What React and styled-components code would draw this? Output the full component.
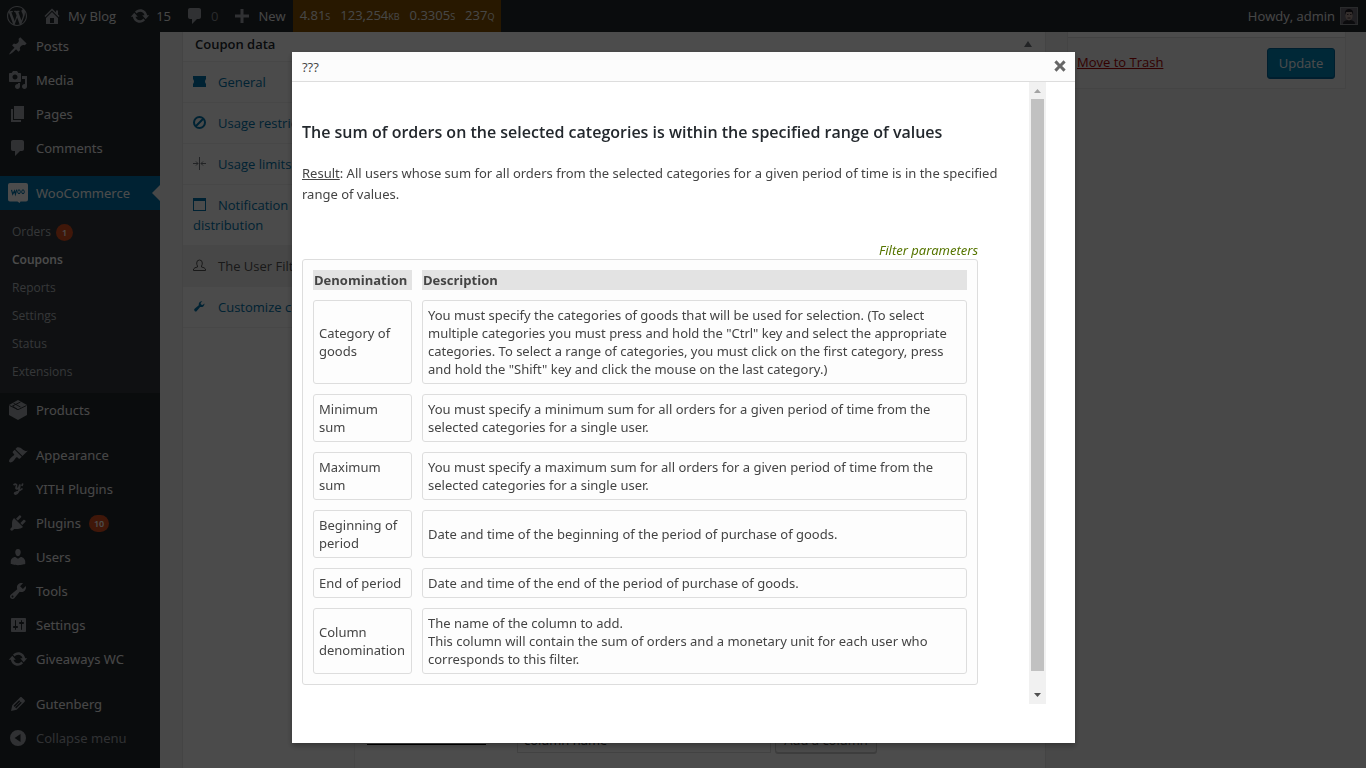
import React from "react";
import styled, { createGlobalStyle, css } from "styled-components";

const FONT = '"Open Sans", "Noto Sans", sans-serif';
const WIDE_FONT = '"Noto Sans", "Open Sans", sans-serif';

const GlobalStyle = createGlobalStyle`
  *, *::before, *::after { box-sizing: border-box; }
  body { margin: 0; background: #f1f1f1; font: 13px/20px ${FONT}; color: #444; }
  a { text-decoration: none; color: inherit; }
  ul { list-style: none; margin: 0; padding: 0; }
  h1, h2, p { margin: 0; }
`;

/* ---------- icons (20 x 20 grid) ---------- */

const PATHS = {
  wordpress:
    "M20 10c0-5.51-4.49-10-10-10C4.48 0 0 4.49 0 10c0 5.52 4.48 10 10 10 5.51 0 10-4.48 10-10zM7.78 15.37L4.37 6.22c.55-.02 1.17-.08 1.17-.08.5-.06.44-1.13-.06-1.11 0 0-1.45.11-2.37.11-.18 0-.37 0-.58-.01C4.12 2.69 6.87 1.11 10 1.11c2.33 0 4.45.87 6.05 2.34-.68-.11-1.65.39-1.65 1.58 0 .74.45 1.36.9 2.1.35.61.55 1.36.55 2.46 0 1.49-1.4 5-1.4 5l-3.03-8.37c.54-.02.82-.17.82-.17.5-.05.44-1.25-.06-1.22 0 0-1.44.12-2.38.12-.87 0-2.33-.12-2.33-.12-.5-.03-.56 1.2-.06 1.22l.92.08 1.26 3.41zM17.41 10c.24-.64.74-1.87.43-4.25.7 1.29 1.05 2.71 1.05 4.25 0 3.29-1.73 6.24-4.4 7.78.97-2.59 1.94-5.2 2.92-7.78zM6.1 18.09C3.12 16.65 1.11 13.53 1.11 10c0-1.3.23-2.48.72-3.59C3.25 10.3 4.67 14.2 6.1 18.09zm4.03-6.63l2.58 6.98c-.86.29-1.76.45-2.71.45-.79 0-1.57-.11-2.29-.33.81-2.38 1.62-4.74 2.42-7.1z",
  home:
    "M16 8.5l1.53 1.53-1.06 1.06L10 4.6l-6.47 6.49-1.06-1.06L10 2.5l4 4v-2h2v4zm-6-2.46l6 5.99V18H4v-5.97zM12 17v-5H8v5h4z",
  update:
    "M10.2 3.28c3.53 0 6.43 2.61 6.92 6h2.08l-3.5 4-3.5-4h2.32c-.45-1.97-2.21-3.45-4.32-3.45-1.45 0-2.73.71-3.54 1.78L4.95 5.66C6.23 4.2 8.11 3.28 10.2 3.28zm-.4 13.44c-3.52 0-6.43-2.61-6.92-6H.8l3.5-4c1.17 1.33 2.33 2.67 3.5 4H5.48c.45 1.97 2.21 3.45 4.32 3.45 1.45 0 2.73-.71 3.54-1.78l1.71 1.95c-1.28 1.46-3.15 2.38-5.25 2.38z",
  comment:
    "M5 2h9c1.1 0 2 .9 2 2v7c0 1.1-.9 2-2 2h-2l-5 5v-5H5c-1.1 0-2-.9-2-2V4c0-1.1.9-2 2-2z",
  plus: "M17 8.5v3h-5.5V17h-3v-5.500H3v-3h5.500V3h3v5.500z",
  pin:
    "M10.44 3.02l1.82-1.82 6.36 6.35-1.83 1.82c-1.05-.68-2.48-.57-3.41.36l-.75.75c-.92.93-1.04 2.35-.35 3.41l-1.83 1.82-2.41-2.41-2.8 2.79c-.42.42-3.38 2.71-3.8 2.29s1.86-3.39 2.28-3.81l2.79-2.79L4.1 9.36l1.83-1.82c1.05.69 2.48.57 3.4-.36l.75-.75c.93-.92 1.05-2.35.36-3.41z",
  media:
    "M13 11V4c0-.55-.45-1-1-1h-1.67L9 1H5L3.67 3H2c-.55 0-1 .45-1 1v7c0 .55.45 1 1 1h10c.55 0 1-.45 1-1zM7 4.5c1.38 0 2.5 1.12 2.5 2.5S8.38 9.5 7 9.5 4.5 8.38 4.5 7 5.62 4.5 7 4.5zM14 6h5v10.5c0 1.38-1.12 2.5-2.5 2.5S14 17.88 14 16.5s1.12-2.5 2.5-2.5c.17 0 .34.02.5.05V9h-3V6zm-4 8.05V13h2v3.5c0 1.38-1.12 2.5-2.5 2.5S7 17.88 7 16.5 8.12 14 9.5 14c.17 0 .34.02.5.05z",
  page: "M6 15V2h10v13H6zm-1 1h8v2H3V5h2v11z",
  appearance:
    "M14.48 11.06L7.41 3.99l1.5-1.5c.5-.56 2.3-.47 3.51.32 1.21.8 1.43 1.28 2.91 2.1 1.18.64 2.45 1.26 4.45.85zm-.71.71L6.7 4.7 4.93 6.47c-.39.39-.39 1.02 0 1.41l1.06 1.06c.39.39.39 1.03 0 1.42-.6.6-1.43 1.11-2.21 1.69-.35.26-.7.53-1.01.84C1.43 14.23.4 16.08 1.4 17.07c.99 1 2.84-.03 4.18-1.36.31-.31.58-.66.85-1.02.57-.78 1.08-1.61 1.69-2.21.39-.39 1.02-.39 1.41 0l1.06 1.06c.39.39 1.02.39 1.41 0z",
  plugins:
    "M13.11 4.36L9.87 7.6 8 5.73l3.24-3.24c.35-.34 1.05-.2 1.56.32.52.51.66 1.21.31 1.55zm-8 1.77l.91-1.12 9.01 9.01-1.19.84c-.71.71-2.63 1.16-3.82 1.16H6.14L4.9 17.26c-.59.59-1.54.59-2.12 0-.59-.58-.59-1.53 0-2.12l1.24-1.24v-3.88c0-1.13.4-3.19 1.09-3.89zm7.26 3.97l3.24-3.24c.34-.35 1.04-.21 1.55.31.52.51.66 1.21.31 1.55l-3.24 3.25z",
  users:
    "M10 9.25c-2.27 0-2.73-3.44-2.73-3.44C7 4.02 7.82 2 9.97 2c2.16 0 2.98 2.02 2.71 3.81 0 0-.41 3.44-2.68 3.44zm0 2.57L12.72 10c2.39 0 4.52 2.33 4.52 4.53v2.49s-3.65 1.13-7.24 1.13c-3.65 0-7.24-1.13-7.24-1.13v-2.49c0-2.25 1.94-4.48 4.47-4.48z",
  tools:
    "M16.68 9.77c-1.34 1.34-3.3 1.67-4.95.99l-5.41 6.52c-.99.99-2.59.99-3.58 0s-.99-2.59 0-3.57l6.52-5.42c-.68-1.65-.35-3.61.99-4.95 1.28-1.28 3.12-1.62 4.72-1.06l-2.89 2.89 2.82 2.82 2.86-2.87c.53 1.58.18 3.39-1.08 4.65zM3.81 16.21c.4.39 1.04.39 1.43 0 .4-.4.4-1.04 0-1.43-.39-.4-1.03-.4-1.43 0-.39.39-.39 1.03 0 1.43z",
  settings:
    "M18 16V4c0-.55-.45-1-1-1H4c-.55 0-1 .45-1 1v12c0 .55.45 1 1 1h13c.55 0 1-.45 1-1zM8 11h1c.55 0 1 .45 1 1s-.45 1-1 1H8v1.5c0 .28-.22.5-.5.5s-.5-.22-.5-.5V13H6c-.55 0-1-.45-1-1s.45-1 1-1h1V5.5c0-.28.22-.5.5-.5s.5.22.5.5V11zm5-2h-1c-.55 0-1-.45-1-1s.45-1 1-1h1V5.5c0-.28.22-.5.5-.5s.5.22.5.5V7h1c.55 0 1 .45 1 1s-.45 1-1 1h-1v5.5c0 .28-.22.5-.5.5s-.5-.22-.5-.5V9z",
  edit:
    "M13.89 3.39l2.71 2.72c.46.46.42 1.24.03 1.64l-8.01 8.02-5.56 1.16 1.16-5.58s7.6-7.63 7.99-8.03c.39-.39 1.22-.39 1.68.07zm-2.73 2.79l-5.59 5.61 1.11 1.11 5.54-5.65zm-2.97 8.23l5.58-5.6-1.07-1.08-5.59 5.6z",
  collapse:
    "M10 2a8 8 0 1 0 0 16 8 8 0 0 0 0-16zm2.5 4v8L6.6 10z",
  close:
    "M12.12 10l3.53 3.53-2.12 2.12L10 12.12l-3.54 3.54-2.12-2.12L7.88 10 4.34 6.46l2.12-2.12L10 7.88l3.54-3.53 2.12 2.12z",
};

const IconSvg = styled.svg`
  flex: none;
  display: block;
  width: ${(p) => p.$size || 20}px;
  height: ${(p) => p.$size || 20}px;
  fill: currentColor;
`;

function Icon({ name, size }) {
  return (
    <IconSvg $size={size} viewBox="0 0 20 20" aria-hidden="true">
      <path fillRule="evenodd" d={PATHS[name]} />
    </IconSvg>
  );
}

function ProductsIcon() {
  return (
    <IconSvg viewBox="0 0 20 20" aria-hidden="true">
      <path d="M10 0l9 5v10l-9 5-9-5V5z" />
      <path
        d="M1.500 5.500L10 9.700l8.500-4.200M5.500 3.200l7 3.800M9.500 9.500l-5-3.500 8-4"
        fill="none"
        stroke="#23282d"
        strokeWidth=".9"
      />
    </IconSvg>
  );
}

function WooIcon() {
  return (
    <IconSvg viewBox="0 0 20 20" aria-hidden="true">
      <path d="M2 0h16q2 0 2 2v14.500q0 2-2 2h-5.500L11.500 20 9.500 18.500H2q-2 0-2-2V2q0-2 2-2z" />
      <path
        d="M3.500 6.800l1.200 4.400 1.800-3.300.9 3.300 1.300-4.600"
        fill="none"
        stroke="#0073aa"
        strokeWidth="1.200"
      />
      <ellipse cx="11" cy="8.800" rx="1.300" ry="2" fill="none" stroke="#0073aa" />
      <ellipse cx="15" cy="8.800" rx="1.300" ry="2" fill="none" stroke="#0073aa" />
    </IconSvg>
  );
}

function YithIcon() {
  return (
    <IconSvg viewBox="0 0 20 20" aria-hidden="true">
      <path
        d="M5.500 6c2-1.500 3.500-1 3 1s-1 3 .5 2.800 2.500-2 3-4.300c-.3 4-1 8.500-4 9.500-1.500.4-2-1-.5-1.500 2.500-1 5-2 7-4M14.800 4.500l-1 2.500"
        fill="none"
        stroke="currentColor"
        strokeWidth="1.700"
      />
    </IconSvg>
  );
}

const MENU_ICONS = { yith: YithIcon, products: ProductsIcon };

function MenuIcon({ name }) {
  const Drawing = MENU_ICONS[name];
  return Drawing ? <Drawing /> : <Icon name={name} />;
}

function Avatar() {
  return (
    <svg width="18" height="18" viewBox="0 0 18 18" role="img" aria-label="admin">
      <rect width="18" height="18" fill="#8c8f94" />
      <rect x="1" y="1" width="16" height="16" fill="#6d6a72" />
      <path d="M3 17c0-3 2.500-4 6-4s6 1 6 4z" fill="#26262c" />
      <ellipse cx="9" cy="8.500" rx="3.600" ry="5" fill="#b09a94" />
      <path d="M5 8c-.6-4 1.200-6 4-6s4.800 2 4 6l-1-3H6z" fill="#1f1c22" />
      <path d="M7 7.500h1.500M10 7.500h1.500M7.500 11h3" stroke="#40343a" />
    </svg>
  );
}

/* ---------- admin bar ---------- */

const AdminBar = styled.header`
  position: fixed;
  inset: 0 0 auto 0;
  z-index: 2;
  height: 32px;
  display: flex;
  align-items: stretch;
  padding: 0 8px 0 7px;
  background: #23282d;
  color: #eee;
`;

const BarLink = styled.a`
  display: flex;
  align-items: center;
  gap: 6px;
  padding-right: ${(p) => p.$after || 14}px;
  color: ${(p) => (p.$dim ? "#8b8f93" : "#eee")};
  svg { color: #a0a5aa; }
`;

const Stats = styled.a`
  display: flex;
  align-items: center;
  gap: 10px;
  padding: 0 7px;
  background: #855000;
  color: #eee;
  small { font-size: 9px; }
`;

const Account = styled.a`
  display: flex;
  align-items: center;
  gap: 5px;
  margin-left: auto;
`;

/* ---------- side menu ---------- */

const Shell = styled.div`
  display: grid;
  grid-template-columns: 160px minmax(0, 1fr);
  min-height: 100vh;
`;

const SideMenu = styled.nav`
  padding-top: 29px;
  background: #23282d;
  color: #eee;
  font-family: ${WIDE_FONT};
`;

const MenuLink = styled.a`
  position: relative;
  display: flex;
  align-items: center;
  gap: 8px;
  height: 34px;
  margin-top: ${(p) => (p.$spaced ? 11 : 0)}px;
  padding-left: 8px;
  color: ${(p) => (p.$dim ? "#a0a5aa" : "#eee")};
  svg { color: ${(p) => (p.$active ? "#fff" : "#a0a5aa")}; }
  ${(p) =>
    p.$active &&
    css`
      background: #0073aa;
      color: #fff;
      &::after {
        content: "";
        position: absolute;
        right: 0;
        border: 8px solid transparent;
        border-right-color: #f1f1f1;
        border-left-width: 0;
      }
    `}
`;

const SubMenu = styled.ul`
  padding: 8px 0 7px;
  background: #32373c;
  font-family: ${FONT};
`;

const SubLink = styled.a`
  display: flex;
  align-items: center;
  gap: 5px;
  height: 28px;
  padding-left: 12px;
  font-size: 12px;
  font-weight: ${(p) => (p.$current ? 600 : 400)};
  color: ${(p) => (p.$current ? "#fff" : "#b4b9be")};
`;

const Count = styled.span`
  min-width: 17px;
  height: 17px;
  padding: 0 5px;
  border-radius: 9px;
  background: #d54e21;
  color: #fff;
  font-size: 9px;
  font-weight: 600;
  line-height: 17px;
  text-align: center;
`;

/* ---------- coupon editor ---------- */

const Editor = styled.main`
  display: flex;
  align-items: stretch;
  gap: 21px;
  padding: 32px 20px 0 22px;
`;

const CouponBox = styled.section`
  flex: 1;
  min-width: 0;
  display: flex;
  flex-direction: column;
  border: solid #e5e5e5;
  border-width: 0 1px;
  background: #fff;
`;

const BoxHeader = styled.header`
  display: flex;
  justify-content: space-between;
  align-items: flex-start;
  height: 30px;
  padding: 2px 13px 0 12px;
  border-bottom: 1px solid #eee;
  color: #23282d;
  h2 { font-size: 13px; font-weight: 600; line-height: 20px; }
`;

const Toggle = styled.button`
  display: flex;
  align-items: center;
  height: 20px;
  padding: 0;
  border: 0;
  background: none;
  color: #72777c;
`;

const BoxBody = styled.div`
  flex: 1;
  display: grid;
  grid-template-columns: 172px minmax(0, 1fr);
`;

const Tabs = styled.ul`
  border-right: 1px solid #eee;
  background: #fafafa;
`;

const TabLink = styled.a`
  display: block;
  padding: 10px;
  border-bottom: 1px solid #eee;
  background: ${(p) => (p.$current ? "#eee" : "transparent")};
  color: ${(p) => (p.$current ? "#555" : "#0073aa")};
  svg {
    display: inline-block;
    vertical-align: -1px;
    margin-right: 12px;
  }
`;

const Panel = styled.div`
  display: flex;
  flex-direction: column;
  justify-content: flex-end;
  padding: 0 12px 15px;
`;

const ColumnForm = styled.form`
  display: flex;
  align-items: flex-start;
  gap: 4px;
`;

const ColumnLabel = styled.label`
  width: 119px;
  height: 20px;
  margin-right: 27px;
  border-bottom: 1px solid #000;
  line-height: 14px;
`;

const ColumnInput = styled.input`
  width: 254px;
  height: 28px;
  padding: 2px 6px 0;
  border: 1px solid #ddd;
  color: #32373c;
  font: 13px ${FONT};
`;

const ColumnButton = styled.button`
  width: 102px;
  height: 28px;
  padding: 2px 0 0;
  border: 1px solid #ccc;
  border-radius: 3px;
  background: #f7f7f7;
  box-shadow: 0 1px 0 #ccc;
  color: #555;
  font: 13px ${FONT};
`;

const PublishBox = styled.aside`
  align-self: flex-start;
  width: 279px;
  border: solid #e5e5e5;
  border-width: 0 1px 1px;
  background: #fff;
`;

const PublishActions = styled.div`
  display: flex;
  justify-content: space-between;
  align-items: flex-start;
  margin-top: 5px;
  padding: 10px 10px 9px 9px;
  border-top: 1px solid #ddd;
  background: #f5f5f5;
`;

const TrashLink = styled.a`
  padding-top: 4px;
  color: #a00;
  text-decoration: underline;
`;

const UpdateButton = styled.button`
  width: 68px;
  height: 31px;
  padding: 0 0 2px;
  border: 1px solid #006799;
  border-radius: 3px;
  background: #0085ba;
  box-shadow: inset 0 -1px 0 #006799;
  color: #fff;
  font: 13px ${FONT};
`;

/* ---------- dialog ---------- */

const Backdrop = styled.div`
  position: fixed;
  inset: 0;
  z-index: 3;
  display: flex;
  justify-content: center;
  align-items: stretch;
  padding: 52px 0 25px 1px;
  background: rgba(0, 0, 0, 0.7);
`;

const Dialog = styled.section`
  display: flex;
  flex-direction: column;
  width: 783px;
  max-width: 100%;
  background: #fff;
  box-shadow: 0 3px 6px rgba(0, 0, 0, 0.3);
`;

const DialogHeader = styled.header`
  display: flex;
  justify-content: space-between;
  align-items: center;
  height: 30px;
  padding: 0 5px 2px 10px;
  border-bottom: 1px solid #ddd;
  background: #fcfcfc;
  h1 { padding-top: 2px; font-size: 13px; font-weight: 400; line-height: 20px; }
`;

const CloseButton = styled.button`
  padding: 0;
  border: 0;
  background: none;
  color: #666;
`;

const DialogBody = styled.div`
  flex: 1;
  min-height: 0;
  display: flex;
  margin: 0 29px 39px 10px;
`;

const DialogContent = styled.div`
  flex: 1;
  min-width: 0;
  overflow: hidden;
  font-family: ${WIDE_FONT};
  h2 {
    padding: 40px 0 21px;
    color: #23282d;
    font-family: ${FONT};
    font-size: 16px;
    font-weight: 600;
    line-height: 20px;
  }
  p {
    padding-right: 10px;
    line-height: 21px;
  }
`;

const Legend = styled.div`
  width: 676px;
  padding-top: 36px;
  color: #567500;
  font-style: italic;
  line-height: 18px;
  text-align: right;
`;

const Params = styled.table`
  width: 676px;
  border: 1px solid #ddd;
  border-radius: 3px;
  border-collapse: separate;
  border-spacing: 10px;
  background: #fdfdfd;
  table-layout: fixed;
  line-height: 18px;
  th {
    padding: 1px;
    background: #e3e3e3;
    font-family: ${FONT};
    font-weight: 700;
    text-align: left;
  }
  th:first-child { width: 99px; }
  td {
    padding: 5px;
    border: 1px solid #ddd;
    border-radius: 3px;
    vertical-align: middle;
  }
`;

const ScrollTrack = styled.div`
  display: flex;
  flex-direction: column;
  width: 17px;
  background: #f1f1f1;
`;

const ScrollThumb = styled.div`
  flex: 1;
  margin: 0 2px 16px;
  background: #c1c1c1;
`;

const ScrollArrow = styled.svg`
  display: block;
  width: 17px;
  height: 17px;
  fill: ${(p) => p.$fill};
`;

/* ---------- data ---------- */

const MENU_TOP = [
  ["Posts", "pin"],
  ["Media", "media"],
  ["Pages", "page"],
  ["Comments", "comment"],
];

const SUBMENU = ["Orders", "Coupons", "Reports", "Settings", "Status", "Extensions"];

const MENU_BOTTOM = [
  { label: "Products", icon: "products" },
  { label: "Appearance", icon: "appearance", spaced: true },
  { label: "YITH Plugins", icon: "yith" },
  { label: "Plugins", icon: "plugins", count: 10 },
  { label: "Users", icon: "users" },
  { label: "Tools", icon: "tools" },
  { label: "Settings", icon: "settings" },
  { label: "Giveaways WC", icon: "update" },
  { label: "Gutenberg", icon: "edit", spaced: true },
  { label: "Collapse menu", icon: "collapse", dim: true },
];

const TAB_ICONS = {
  ticket: <path d="M0 1h13v3q-2 2.500 0 5v3H0V9q2-2.500 0-5z" />,
  block: (
    <path
      d="M6.500 1a5.500 5.500 0 1 1 0 11 5.500 5.500 0 0 1 0-11zM2.800 10.200l7.400-7.400"
      fill="none"
      stroke="currentColor"
      strokeWidth="2"
    />
  ),
  limits: (
    <path
      d="M6.500 0v13M0 6.500h5M3 4.500l2 2-2 2M13 6.500H8M10 4.500l-2 2 2 2"
      fill="none"
      stroke="#72777c"
    />
  ),
  window: <path fillRule="evenodd" d="M0 0h13v13H0zM1 3v9h11V3z" />,
  user: (
    <path
      d="M.5 11.500V10q1-1.500 4-2V7Q3.700 6 3.700 4q0-3 2.800-3t2.800 3q0 2-.8 3v1q3 .5 4 2v1.500z"
      fill="none"
      stroke="currentColor"
    />
  ),
  wrench: (
    <path d="M11.500 3.500a3.300 3.300 0 0 1-4.400 3.400L3.800 10.900a1.500 1.500 0 0 1-2.200-2.100l4.200-3.500A3.300 3.300 0 0 1 9.300 1.200L7.600 3l.4 1.500 1.600.4z" />
  ),
};

const TABS = [
  ["General", "ticket"],
  ["Usage restriction", "block"],
  ["Usage limits", "limits"],
  ["Notification distribution", "window"],
  ["The User Filters", "user"],
  ["Customize columns", "wrench"],
];

const PARAMS = [
  [
    "Category of goods",
    'You must specify the categories of goods that will be used for selection. (To select multiple categories you must press and hold the "Ctrl" key and select the appropriate categories. To select a range of categories, you must click on the first category, press and hold the "Shift" key and click the mouse on the last category.)',
  ],
  [
    "Minimum sum",
    "You must specify a minimum sum for all orders for a given period of time from the selected categories for a single user.",
  ],
  [
    "Maximum sum",
    "You must specify a maximum sum for all orders for a given period of time from the selected categories for a single user.",
  ],
  [
    "Beginning of period",
    "Date and time of the beginning of the period of purchase of goods.",
  ],
  ["End of period", "Date and time of the end of the period of purchase of goods."],
  [
    "Column denomination",
    <>
      The name of the column to add.
      <br />
      This column will contain the sum of orders and a monetary unit for each user who
      corresponds to this filter.
    </>,
  ],
];

export default function App() {
  return (
    <>
      <GlobalStyle />
      <AdminBar>
        <BarLink href="#" $after={15} aria-label="About WordPress">
          <Icon name="wordpress" />
        </BarLink>
        <BarLink href="#">
          <Icon name="home" />
          My Blog
        </BarLink>
        <BarLink href="#">
          <Icon name="update" />
          15
        </BarLink>
        <BarLink href="#" $dim>
          <Icon name="comment" />0
        </BarLink>
        <BarLink href="#" $after={7}>
          <Icon name="plus" />
          New
        </BarLink>
        <Stats href="#">
          <span>4.81<small>S</small></span>
          <span>123,254<small>KB</small></span>
          <span>0.3305<small>S</small></span>
          <span>237<small>Q</small></span>
        </Stats>
        <Account href="#">
          Howdy, admin
          <Avatar />
        </Account>
      </AdminBar>

      <Shell>
        <SideMenu>
          {MENU_TOP.map(([label, icon]) => (
            <MenuLink href="#" key={label}>
              <Icon name={icon} />
              {label}
            </MenuLink>
          ))}
          <MenuLink href="#" $spaced $active>
            <WooIcon />
            WooCommerce
          </MenuLink>
          <SubMenu>
            {SUBMENU.map((label) => (
              <li key={label}>
                <SubLink href="#" $current={label === "Coupons"}>
                  {label}
                  {label === "Orders" && <Count>1</Count>}
                </SubLink>
              </li>
            ))}
          </SubMenu>
          {MENU_BOTTOM.map(({ label, icon, spaced, dim, count }) => (
            <MenuLink href="#" key={label} $spaced={spaced} $dim={dim}>
              <MenuIcon name={icon} />
              {label}
              {count && <Count>{count}</Count>}
            </MenuLink>
          ))}
        </SideMenu>

        <Editor>
          <CouponBox>
            <BoxHeader>
              <h2>Coupon data</h2>
              <Toggle type="button" aria-label="Toggle panel">
                <svg width="8" height="6" viewBox="0 0 8 6" fill="currentColor">
                  <path d="M0 6h8L4 0z" />
                </svg>
              </Toggle>
            </BoxHeader>
            <BoxBody>
              <Tabs>
                {TABS.map(([label, icon]) => (
                  <li key={label}>
                    <TabLink href="#" $current={icon === "user"}>
                      <IconSvg $size={13} viewBox="0 0 13 13" aria-hidden="true">
                        {TAB_ICONS[icon]}
                      </IconSvg>
                      {label}
                    </TabLink>
                  </li>
                ))}
              </Tabs>
              <Panel>
                <ColumnForm>
                  <ColumnLabel htmlFor="column-name">New column</ColumnLabel>
                  <ColumnInput id="column-name" type="text" defaultValue="column name" />
                  <ColumnButton type="button">Add a column</ColumnButton>
                </ColumnForm>
              </Panel>
            </BoxBody>
          </CouponBox>
          <PublishBox>
            <PublishActions>
              <TrashLink href="#">Move to Trash</TrashLink>
              <UpdateButton type="button">Update</UpdateButton>
            </PublishActions>
          </PublishBox>
        </Editor>
      </Shell>

      <Backdrop>
        <Dialog role="dialog" aria-modal="true" aria-labelledby="dialog-title">
          <DialogHeader>
            <h1 id="dialog-title">???</h1>
            <CloseButton type="button" aria-label="Close">
              <Icon name="close" />
            </CloseButton>
          </DialogHeader>
          <DialogBody>
            <DialogContent>
              <h2>
                The sum of orders on the selected categories is within the specified range
                of values
              </h2>
              <p>
                <u>Result</u>: All users whose sum for all orders from the selected
                categories for a given period of time is in the specified range of values.
              </p>
              <Legend>Filter parameters</Legend>
              <Params>
                <thead>
                  <tr>
                    <th scope="col">Denomination</th>
                    <th scope="col">Description</th>
                  </tr>
                </thead>
                <tbody>
                  {PARAMS.map(([name, description]) => (
                    <tr key={name}>
                      <td>{name}</td>
                      <td>{description}</td>
                    </tr>
                  ))}
                </tbody>
              </Params>
            </DialogContent>
            <ScrollTrack aria-hidden="true">
              <ScrollArrow $fill="#a3a3a3" viewBox="0 0 17 17">
                <path d="M5 11h7L8.500 7z" />
              </ScrollArrow>
              <ScrollThumb />
              <ScrollArrow $fill="#505050" viewBox="0 0 17 17">
                <path d="M5 6h7l-3.500 4z" />
              </ScrollArrow>
            </ScrollTrack>
          </DialogBody>
        </Dialog>
      </Backdrop>
    </>
  );
}
